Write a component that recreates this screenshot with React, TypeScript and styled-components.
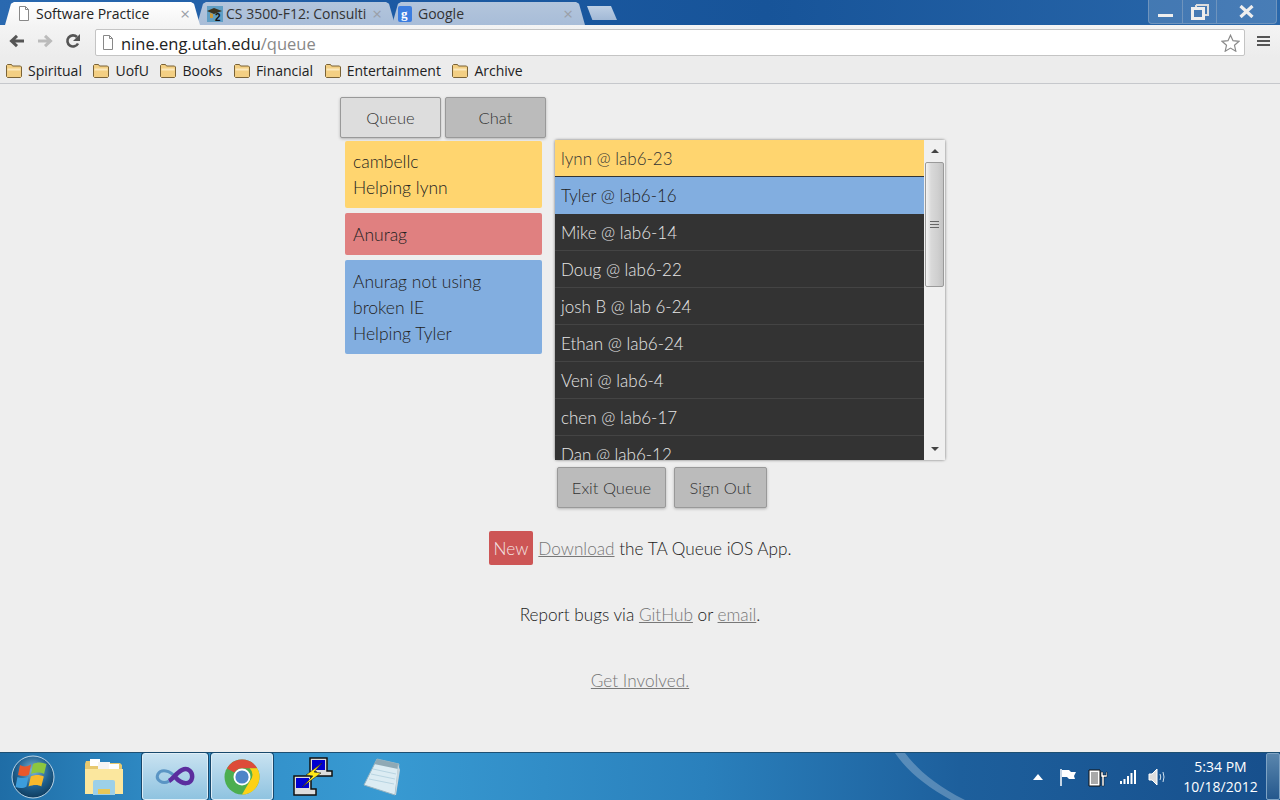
import React, { FC } from 'react'
import styled, { createGlobalStyle } from 'styled-components'

const GlobalStyle = createGlobalStyle`
  html, body {
    margin: 0;
    padding: 0;
    height: 100%;
    overflow: hidden;
    background: #eee;
  }
  #root {
    height: 100%;
  }
`

const uiFont = `"Open Sans", "Liberation Sans", sans-serif`
const pageFont = `Lato, "Open Sans", sans-serif`

const Screen = styled.div`
  width: 1280px;
  height: 800px;
  display: flex;
  flex-direction: column;
  overflow: hidden;
  font-family: ${pageFont};
`

/* browser chrome */
const TabStrip = styled.div`
  height: 25px;
  flex: none;
  display: flex;
  align-items: flex-end;
  padding-left: 5px;
  background: linear-gradient(90deg, #2a69b0 0, #1c5aa3 30%, #175499 60%, #2a68ab 100%);
`

const Tab = styled.div<{ $active?: boolean; $w: number; $pad: number; $close: number; $gap: number }>`
  width: ${p => p.$w}px;
  height: 23px;
  margin-right: -3px;
  padding: 0 ${p => p.$close}px 0 ${p => p.$pad}px;
  box-sizing: border-box;
  display: flex;
  align-items: center;
  gap: ${p => p.$gap}px;
  flex: none;
  position: relative;
  z-index: ${p => (p.$active ? 2 : 1)};
  font: 400 14px ${uiFont};
  color: ${p => (p.$active ? '#222' : '#333')};
  clip-path: polygon(0 100%, 6px 8%, 9px 0, calc(100% - 9px) 0, calc(100% - 6px) 8%, 100% 100%);
  background: ${p => (p.$active ? 'linear-gradient(#fff, #f4f4f4)' : 'linear-gradient(#b3c5dc, #a8bdd8)')};
`

const TabTitle = styled.span`
  flex: 1;
  overflow: hidden;
  white-space: nowrap;
`

const TabClose = styled.span`
  font: 400 17px ${uiFont};
  color: #9a9fa8;
`

const NewTab = styled.div`
  width: 30px;
  height: 14px;
  margin: 0 0 5px 5px;
  flex: none;
  background: linear-gradient(#bdcfe4, #a2b9d6);
  clip-path: polygon(0 0, 80% 0, 100% 100%, 18% 100%);
`

const WindowControls = styled.div`
  margin-left: auto;
  margin-right: 3px;
  align-self: flex-start;
  height: 23px;
  display: flex;
  border: 1px solid #6f94bd;
  border-top: none;
  border-radius: 0 0 4px 4px;
  background: rgba(255, 255, 255, 0.14);
`

const WinButton = styled.div<{ $w: number }>`
  width: ${p => p.$w}px;
  display: flex;
  align-items: center;
  justify-content: center;
  border-left: 1px solid #6f94bd;
  &:first-child {
    border-left: none;
  }
`

const Toolbar = styled.div`
  height: 32px;
  flex: none;
  display: flex;
  align-items: center;
  background: linear-gradient(#f4f4f4, #ececec);
`

const NavIcons = styled.div`
  width: 95px;
  padding-left: 9px;
  box-sizing: border-box;
  display: flex;
  align-items: center;
  gap: 12px;
`

const AddressBar = styled.div`
  width: 1150px;
  height: 27px;
  margin-top: 3px;
  box-sizing: border-box;
  display: flex;
  align-items: center;
  padding: 0 4px 0 6px;
  gap: 7px;
  background: #fff;
  border: 1px solid #c4c4c4;
  border-radius: 2px;
  font: 400 16.5px ${uiFont};
  color: #222;
`

const UrlPath = styled.span`
  color: #888;
`

const Url = styled.span`
  flex: 1;
  padding-top: 1px;
`

const MenuBars = styled.div`
  margin-left: 12px;
  width: 13px;
  height: 10px;
  display: flex;
  flex-direction: column;
  justify-content: space-between;
  i {
    display: block;
    height: 2px;
    background: #555;
  }
`

const BookmarkBar = styled.div`
  height: 27px;
  flex: none;
  box-sizing: border-box;
  padding: 1px 0 0 6px;
  display: flex;
  align-items: center;
  gap: 11.5px;
  background: #ececec;
  border-bottom: 1px solid #c6c8cc;
`

const Bookmark = styled.div`
  display: flex;
  align-items: center;
  gap: 6px;
  font: 400 14px ${uiFont};
  color: #222;
`

/* queue page */
const Page = styled.div`
  flex: 1;
  min-height: 0;
  background: #eee;
  display: flex;
  flex-direction: column;
  padding-top: 13px;
  font-weight: 300;
  font-size: 17.5px;
  color: #222;
`

const Main = styled.div`
  width: 606px;
  margin-left: 340px;
`

const PanelTabs = styled.div`
  display: flex;
  gap: 4px;
`

const GreyButton = styled.button<{ $light?: boolean; $w: number }>`
  width: ${p => p.$w}px;
  height: 41px;
  padding: 0;
  box-sizing: border-box;
  border: 1px solid #999;
  border-radius: 2px;
  background: ${p => (p.$light ? '#ddd' : '#bbb')};
  box-shadow: 0 1px 3px rgba(0, 0, 0, 0.25);
  font: 300 16.5px ${pageFont};
  color: #333;
`

const Columns = styled.div`
  margin-top: 2px;
  display: flex;
  align-items: flex-start;
`

const TaColumn = styled.div`
  width: 197px;
  margin: 1px 13px 0 5px;
  display: flex;
  flex-direction: column;
  gap: 5px;
`

const TaCard = styled.div<{ $bg: string }>`
  padding: 9px 8px 7px;
  border-radius: 2px;
  line-height: 26px;
  background: ${p => p.$bg};
  &:first-child {
    padding-top: 8px;
  }
`

const StudentPanel = styled.div`
  width: 390px;
  height: 320px;
  display: flex;
  background: #eee;
  border-radius: 2px;
  box-shadow: 0 0 3px rgba(0, 0, 0, 0.55);
`

const Rows = styled.div`
  width: 369px;
  overflow: hidden;
  flex: none;
`

const Row = styled.div<{ $bg: string; $fg: string; $line: string }>`
  height: 37px;
  box-sizing: border-box;
  padding-left: 6px;
  font-size: 17px;
  line-height: 38px;
  white-space: nowrap;
  background: ${p => p.$bg};
  color: ${p => p.$fg};
  border-bottom: 1px solid ${p => p.$line};
`

const Scrollbar = styled.div`
  flex: 1;
  display: flex;
  flex-direction: column;
  align-items: center;
  background: #f0f0f0;
`

const ScrollArrow = styled.div<{ $down?: boolean }>`
  height: 22px;
  flex: none;
  display: flex;
  align-items: center;
  justify-content: center;
  margin-top: ${p => (p.$down ? 'auto' : '0')};
  &::before {
    content: '';
    border-left: 4px solid transparent;
    border-right: 4px solid transparent;
    ${p => (p.$down ? 'border-top: 4px solid #444;' : 'border-bottom: 4px solid #444;')}
  }
`

const ScrollThumb = styled.div`
  width: 19px;
  height: 125px;
  box-sizing: border-box;
  display: flex;
  flex-direction: column;
  align-items: center;
  justify-content: center;
  gap: 2px;
  border: 1px solid #9a9a9a;
  border-radius: 2px;
  background: linear-gradient(90deg, #f4f4f4 0, #d9d9d9 30%, #cfcfcf 70%, #c4c4c4 100%);
  i {
    display: block;
    width: 9px;
    height: 1px;
    background: #666;
  }
`

const QueueActions = styled.div`
  margin: 7px 0 0 217px;
  display: flex;
  gap: 8px;
`

const Footer = styled.div`
  text-align: center;
  font-size: 17.2px;
  color: #222;
`

const FooterLine = styled.div<{ $top: number }>`
  margin-top: ${p => p.$top}px;
  height: 34px;
  line-height: 34px;
`

const NewBadge = styled.span`
  display: inline-block;
  padding: 2px 5px 0;
  margin-right: 5px;
  height: 32px;
  line-height: 32px;
  border-radius: 2px;
  background: #cd5555;
  color: #f4e4e4;
`

const FooterLink = styled.a`
  color: #777;
  text-decoration: underline;
`

/* windows taskbar */
const Taskbar = styled.div`
  height: 48px;
  flex: none;
  position: relative;
  display: flex;
  align-items: center;
  box-sizing: border-box;
  border-top: 1px solid #1d4f72;
  background: linear-gradient(90deg, #1f6da6 0, #2f8ac4 12%, #389ad2 30%, #2a80bc 55%, #1d5f9c 75%, #174f8c 100%);
`

const Streak = styled.svg`
  position: absolute;
  left: 885px;
  top: 0;
`

const TaskSlot = styled.div<{ $w: number; $active?: boolean }>`
  width: ${p => p.$w}px;
  height: 47px;
  flex: none;
  box-sizing: border-box;
  display: flex;
  align-items: center;
  justify-content: center;
  position: relative;
  ${p =>
    p.$active
      ? `
    border: 1px solid #dfeef7;
    border-radius: 3px;
    background: linear-gradient(#c8e2f1, #8fc3e0);
    box-shadow: 0 0 0 1px #17486c;
  `
      : ''}
`

const Tray = styled.div`
  margin-left: auto;
  display: flex;
  align-items: center;
  position: relative;
`

const TrayIcon = styled.div`
  width: 30px;
  display: flex;
  justify-content: center;
`

const Clock = styled.div`
  width: 83px;
  margin-left: 6px;
  text-align: center;
  font: 400 14px/20px ${uiFont};
  color: #fff;
`

const ShowDesktop = styled.div`
  width: 14px;
  height: 47px;
  margin-left: 4px;
  box-sizing: border-box;
  border: 1px solid #7ea3c4;
  border-radius: 2px;
  background: linear-gradient(#5a86ad, #25588d);
`

const PageGlyph: FC<{ color?: string }> = ({ color = '#888' }) => (
  <svg width="12" height="15" viewBox="0 0 12 15">
    <path d="M1.5.5h6l3 3v11h-9z" fill="#fff" stroke={color} />
    <path d="M7.5.5v3h3" fill="none" stroke={color} />
  </svg>
)

const Folder: FC = () => (
  <svg width="16" height="14" viewBox="0 0 16 14">
    <path d="M.5 3V1.5l1-1h4l1 1.5h8l1 1v9.500l-1 1h-13l-1-1z" fill="#f3cf83" stroke="#7a6337" />
    <path d="M1.500 4.500h13v2h-13z" fill="#fbe8bd" />
  </svg>
)

const ArrowIcon: FC<{ dir: 'left' | 'right'; color: string }> = ({ dir, color }) => (
  <svg width="16" height="14" viewBox="0 0 16 14">
    <path
      d={dir === 'left' ? 'M15 7H4M8 1.800 2.500 7 8 12.200' : 'M1 7h11M8 1.800 13.500 7 8 12.200'}
      fill="none"
      stroke={color}
      strokeWidth="3"
    />
  </svg>
)

const ReloadIcon: FC = () => (
  <svg width="16" height="16" viewBox="0 0 16 16">
    <path d="M13 10.500A5.600 5.600 0 1 1 12 4" fill="none" stroke="#555" strokeWidth="2.600" />
    <path d="M15 1v7H8z" fill="#555" />
  </svg>
)

const StarIcon: FC = () => (
  <svg width="19" height="18" viewBox="0 0 19 18">
    <path d="M9.500 1.200l2.500 5.500 6 .6-4.500 4 1.300 5.900-5.300-3.100-5.300 3.100 1.300-5.900-4.500-4 6-.6z" fill="#fff" stroke="#8a8a8a" strokeWidth="1.200" />
  </svg>
)

const CapIcon: FC = () => (
  <svg width="16" height="16" viewBox="0 0 16 16">
    <rect width="16" height="16" fill="#5f9ec4" />
    <path d="M0 5l7-3 8 3-8 3z" fill="#3a3320" />
    <path d="M3 7v5h3V8z" fill="#c89a3c" />
    <text x="8" y="15" fontSize="10" fontWeight="700" fontFamily="Liberation Sans" fill="#111">2</text>
  </svg>
)

const GoogleIcon: FC = () => (
  <svg width="14" height="16" viewBox="0 0 14 16">
    <rect width="14" height="16" rx="2" fill="#3b7de0" />
    <text x="3" y="12" fontSize="13" fontWeight="700" fontFamily="Liberation Serif" fill="#fff">g</text>
  </svg>
)

const StartOrb: FC = () => (
  <svg width="44" height="44" viewBox="0 0 44 44">
    <defs>
      <radialGradient id="orb" cx="50%" cy="35%" r="65%">
        <stop offset="0" stopColor="#7fb6d8" />
        <stop offset="0.6" stopColor="#1f5f8e" />
        <stop offset="1" stopColor="#0f3c5e" />
      </radialGradient>
    </defs>
    <circle cx="22" cy="22" r="21" fill="url(#orb)" stroke="#bcd5e6" strokeWidth="1" />
    <path d="M9 10c3 2 7 2 11-.5l-2 10c-3 2-7 2-11 .5z" fill="#e8582c" />
    <path d="M22 9c4-2 9-2 13.500 0l-2.500 10c-3-2-8-2-13 0z" fill="#8cc63f" />
    <path d="M6.500 22c3 1.500 7 1.500 11-.5l-2 10c-3 2-7 2-11 .5z" fill="#3c9ddc" />
    <path d="M19.800 21.500c4-2 9-2 13 0l-2.500 10c-3-2-8-2-12.800 0z" fill="#f8b92c" />
  </svg>
)

const ExplorerIcon: FC = () => (
  <svg width="42" height="42" viewBox="0 0 42 42">
    <path d="M2 8l1-3h12l2 2h20l2 2v29H2z" fill="#e7c96f" />
    <rect x="7" y="3" width="10" height="7" fill="#fff" />
    <rect x="15" y="6" width="12" height="7" fill="#f4f4f4" />
    <rect x="26" y="8" width="10" height="6" fill="#fff" />
    <path d="M2 13h38v25H2z" fill="#fbe79e" />
    <path d="M10 39V26q0-2 2-2h18q2 0 2 2v13z" fill="#9cd0e8" />
    <rect x="15" y="33" width="12" height="5" fill="#e8c858" />
  </svg>
)

const InfinityIcon: FC = () => (
  <svg width="40" height="24" viewBox="0 0 40 24">
    <path d="M20 12C15 5 6 4 3 9c-3 6 5 11 11 7" fill="none" stroke="#5a95c4" strokeWidth="3" />
    <path d="M14 16c4-2 7-8 13-11 6-3 11 2 10 8-1 6-9 8-17-1" fill="none" stroke="#5b2d9e" strokeWidth="4.500" />
  </svg>
)

const ChromeIcon: FC = () => (
  <svg width="36" height="36" viewBox="0 0 36 36">
    <circle cx="18" cy="18" r="17.500" fill="#4cae4f" />
    <path d="M18 .5A17.500 17.500 0 0 1 33.200 9.300H18A8.800 8.800 0 0 0 10.400 13.600L3 9.500A17.500 17.500 0 0 1 18 .5z" fill="#dd4b39" />
    <path d="M33.200 9.300A17.500 17.500 0 0 1 18 35.500l7.600-13.100a8.800 8.800 0 0 0 0-13.100z" fill="#fcd116" />
    <circle cx="18" cy="18" r="8.500" fill="#fff" />
    <circle cx="18" cy="18" r="6.600" fill="#4e85c8" />
  </svg>
)

const NetworkIcon: FC = () => (
  <svg width="42" height="42" viewBox="0 0 42 42">
    <path d="M18 2h17v13h5v5H24v-4h-6z" fill="#ddd" stroke="#111" strokeWidth="1.500" />
    <rect x="20" y="4" width="13" height="10" fill="#0000d0" />
    <path d="M2 20h17v13h5v6H2v-6h0z" fill="#ddd" stroke="#111" strokeWidth="1.500" />
    <rect x="4" y="22" width="13" height="10" fill="#0000d0" />
    <path d="M30 7 14 19l7 1-11 11 19-14-7-1z" fill="#ffe81a" stroke="#222" strokeWidth=".6" />
  </svg>
)

const NotepadIcon: FC = () => (
  <svg width="38" height="38" viewBox="0 0 38 38">
    <path d="M14 1l22 5-4 31L1 27z" fill="#dcecf3" stroke="#98b4c0" />
    <path d="M14 1l22 5-1 5-24-5z" fill="#8fa9b5" />
    <path d="M10 11l23 5M8 16l24 5M6 21l25 5" stroke="#b9d5e2" />
    <path d="M35 6l2 6-4 25-1 0z" fill="#c8d6dc" />
  </svg>
)

const students: { name: string; bg: string; fg: string; line: string }[] = [
  { name: 'lynn @ lab6-23', bg: '#ffd56f', fg: '#333', line: '#333' },
  { name: 'Tyler @ lab6-16', bg: '#82aee0', fg: '#222', line: '#82aee0' },
  { name: 'Mike @ lab6-14', bg: '#333', fg: '#e6e6e6', line: '#444' },
  { name: 'Doug @ lab6-22', bg: '#333', fg: '#e6e6e6', line: '#444' },
  { name: 'josh B @ lab 6-24', bg: '#333', fg: '#e6e6e6', line: '#444' },
  { name: 'Ethan @ lab6-24', bg: '#333', fg: '#e6e6e6', line: '#444' },
  { name: 'Veni @ lab6-4', bg: '#333', fg: '#e6e6e6', line: '#444' },
  { name: 'chen @ lab6-17', bg: '#333', fg: '#e6e6e6', line: '#444' },
  { name: 'Dan @ lab6-12', bg: '#333', fg: '#e6e6e6', line: '#444' },
]

const bookmarks = ['Spiritual', 'UofU', 'Books', 'Financial', 'Entertainment', 'Archive']

const App: FC = () => (
  <Screen>
    <GlobalStyle />
    <TabStrip>
      <Tab $active $w={195} $pad={13} $close={10} $gap={6}>
        <PageGlyph />
        <TabTitle>Software Practice</TabTitle>
        <TabClose>×</TabClose>
      </Tab>
      <Tab $w={198} $pad={10} $close={13} $gap={3}>
        <CapIcon />
        <TabTitle>CS 3500-F12: Consulti</TabTitle>
        <TabClose>×</TabClose>
      </Tab>
      <Tab $w={193} $pad={6} $close={12} $gap={6}>
        <GoogleIcon />
        <TabTitle>Google</TabTitle>
        <TabClose>×</TabClose>
      </Tab>
      <NewTab />
      <WindowControls>
        <WinButton $w={33}>
          <svg width="16" height="12" viewBox="0 0 16 12">
            <rect x="0" y="8" width="15" height="3" fill="#eee" />
          </svg>
        </WinButton>
        <WinButton $w={33}>
          <svg width="18" height="16" viewBox="0 0 18 16">
            <path d="M5 1h12v10h-3M5 1v3" fill="none" stroke="#ddd" strokeWidth="2" />
            <rect x="1.500" y="4.500" width="11" height="10" fill="none" stroke="#eee" strokeWidth="3" />
          </svg>
        </WinButton>
        <WinButton $w={59}>
          <svg width="15" height="13" viewBox="0 0 15 13">
            <path d="M1.500 1l12 11M13.500 1l-12 11" stroke="#eee" strokeWidth="3.200" />
          </svg>
        </WinButton>
      </WindowControls>
    </TabStrip>
    <Toolbar>
      <NavIcons>
        <ArrowIcon dir="left" color="#555" />
        <ArrowIcon dir="right" color="#bbb" />
        <ReloadIcon />
      </NavIcons>
      <AddressBar>
        <PageGlyph />
        <Url>
          nine.eng.utah.edu<UrlPath>/queue</UrlPath>
        </Url>
        <StarIcon />
      </AddressBar>
      <MenuBars>
        <i />
        <i />
        <i />
      </MenuBars>
    </Toolbar>
    <BookmarkBar>
      {bookmarks.map(b => (
        <Bookmark key={b}>
          <Folder />
          {b}
        </Bookmark>
      ))}
    </BookmarkBar>
    <Page>
      <Main>
        <PanelTabs>
          <GreyButton $light $w={101}>Queue</GreyButton>
          <GreyButton $w={101}>Chat</GreyButton>
        </PanelTabs>
        <Columns>
          <TaColumn>
            <TaCard $bg="#ffd56f">
              cambellc
              <br />
              Helping lynn
            </TaCard>
            <TaCard $bg="#e08080">Anurag</TaCard>
            <TaCard $bg="#82aee0">
              Anurag not using
              <br />
              broken IE
              <br />
              Helping Tyler
            </TaCard>
          </TaColumn>
          <StudentPanel>
            <Rows>
              {students.map(s => (
                <Row key={s.name} $bg={s.bg} $fg={s.fg} $line={s.line}>
                  {s.name}
                </Row>
              ))}
            </Rows>
            <Scrollbar>
              <ScrollArrow />
              <ScrollThumb>
                <i />
                <i />
                <i />
              </ScrollThumb>
              <ScrollArrow $down />
            </Scrollbar>
          </StudentPanel>
        </Columns>
        <QueueActions>
          <GreyButton $w={109}>Exit Queue</GreyButton>
          <GreyButton $w={93}>Sign Out</GreyButton>
        </QueueActions>
      </Main>
      <Footer>
        <FooterLine $top={23}>
          <NewBadge>New</NewBadge>
          <FooterLink>Download</FooterLink> the TA Queue iOS App.
        </FooterLine>
        <FooterLine $top={33}>
          Report bugs via <FooterLink>GitHub</FooterLink> or <FooterLink>email</FooterLink>.
        </FooterLine>
        <FooterLine $top={32}>
          <FooterLink>Get Involved.</FooterLink>
        </FooterLine>
      </Footer>
    </Page>
    <Taskbar>
      <Streak width="90" height="47" viewBox="0 0 90 47">
        <path d="M10 0h10c12 16 30 32 60 47H66C42 34 22 18 10 0z" fill="#fff" opacity="0.25" />
      </Streak>
      <TaskSlot $w={66}>
        <StartOrb />
      </TaskSlot>
      <TaskSlot $w={76}>
        <ExplorerIcon />
      </TaskSlot>
      <TaskSlot $w={66} $active>
        <InfinityIcon />
      </TaskSlot>
      <TaskSlot $w={3} />
      <TaskSlot $w={62} $active>
        <ChromeIcon />
      </TaskSlot>
      <TaskSlot $w={80}>
        <NetworkIcon />
      </TaskSlot>
      <TaskSlot $w={58}>
        <NotepadIcon />
      </TaskSlot>
      <Tray>
        <TrayIcon>
          <svg width="10" height="6" viewBox="0 0 10 6">
            <path d="M5 0l5 6H0z" fill="#fff" />
          </svg>
        </TrayIcon>
        <TrayIcon>
          <svg width="18" height="18" viewBox="0 0 18 18">
            <path d="M2 1v17" stroke="#fff" strokeWidth="1.500" />
            <path d="M3 2h7l2 2h5l-2 4 1 3h-6l-2-2H3z" fill="#fff" />
          </svg>
        </TrayIcon>
        <TrayIcon>
          <svg width="20" height="20" viewBox="0 0 20 20">
            <path d="M1 3h11v16H1z" fill="#fff" stroke="#111" />
            <rect x="3" y="5" width="7" height="12" fill="#aaa" />
            <path d="M13 5v5h1v9h2v-9h3V5h-1v3h-3V5z" fill="#fff" stroke="#111" strokeWidth=".5" />
          </svg>
        </TrayIcon>
        <TrayIcon>
          <svg width="16" height="14" viewBox="0 0 16 14">
            <path d="M0 11h2v3H0zM3.500 9h2v5h-2zM7 6h2v8H7zM10.500 3h2v11h-2zM14 0h2v14h-2z" fill="#fff" />
          </svg>
        </TrayIcon>
        <TrayIcon>
          <svg width="20" height="18" viewBox="0 0 20 18">
            <path d="M1 6h3l5-5v16l-5-5H1z" fill="#ddd" stroke="#fff" />
            <path d="M12 6q1.500 3 0 6M15 4q2 5 0 10" fill="none" stroke="#cfe0ee" strokeWidth="1" />
          </svg>
        </TrayIcon>
        <Clock>
          5:34 PM
          <br />
          10/18/2012
        </Clock>
        <ShowDesktop />
      </Tray>
    </Taskbar>
  </Screen>
)

export default App
